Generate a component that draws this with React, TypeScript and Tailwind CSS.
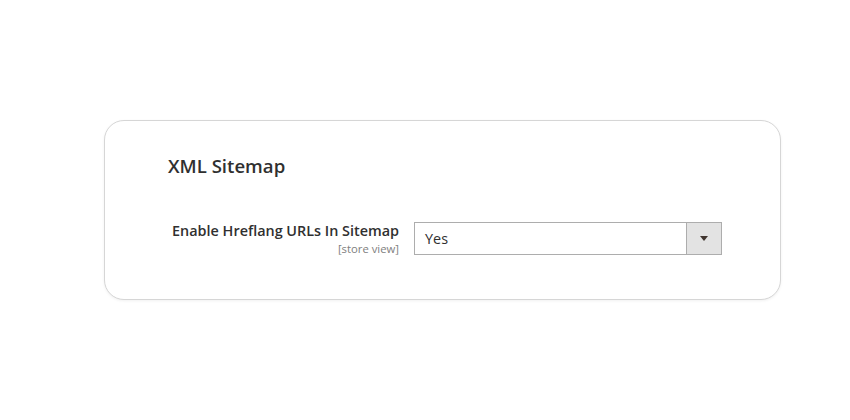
export default function App() {
  return (
    <div className="h-[420px] w-[850px] bg-white font-['Open_Sans',sans-serif] text-[#303030]">
      <div className="pt-[120px] pl-[104px]">
        <div className="h-[180px] w-[677px] rounded-[20px] border border-[#d6d6d6] bg-white shadow-[0_1px_3px_rgba(0,0,0,0.06)]">
          <h2 className="mt-[33px] ml-[63px] text-[18.6px] leading-[24px] font-semibold text-[#303030]">
            XML Sitemap
          </h2>
          <div className="mt-[43px] flex items-start">
            <div className="flex w-[294px] flex-col items-end">
              <span className="text-[14.4px] leading-[20px] font-semibold text-[#303030]">
                Enable Hreflang URLs In Sitemap
              </span>
              <span className="text-[11.3px] leading-[15px] text-[#808080]">[store view]</span>
            </div>
            <div className="ml-[15px] mt-[1px] flex h-[33px] w-[308px] border border-[#adadad] bg-white">
              <span className="flex flex-1 items-center pl-[10px] text-[14.4px] text-[#303030]">Yes</span>
              <span className="flex w-[35px] items-center justify-center border-l border-[#adadad] bg-[#e3e3e3]">
                <svg width="8" height="5" viewBox="0 0 8 5">
                  <path d="M0 0h8L4 5z" fill="#41362f" />
                </svg>
              </span>
            </div>
          </div>
        </div>
      </div>
    </div>
  )
}
